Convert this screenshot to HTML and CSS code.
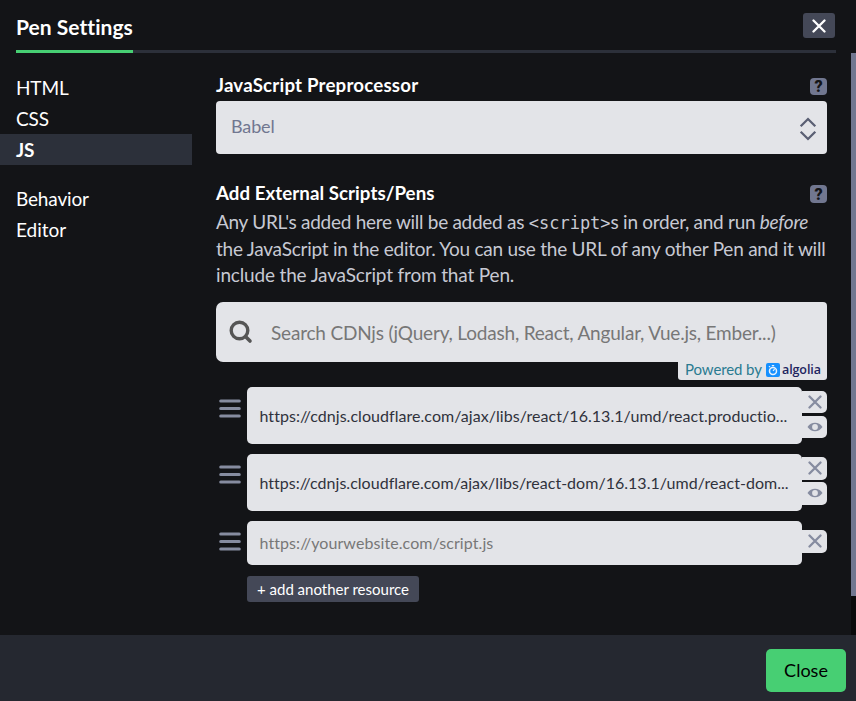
FILE: index.html
```html
<!DOCTYPE html>
<html lang="en">
<head>
<meta charset="utf-8">
<title>Pen Settings</title>
<link rel="stylesheet" href="styles.css">
</head>
<body>
<svg class="defs" width="0" height="0">
  <symbol id="x" viewBox="0 0 14 14"><path d="M1.500 1.500l11 11M12.500 1.500l-11 11" fill="none" stroke="currentColor" stroke-width="2.300" stroke-linecap="round"/></symbol>
  <symbol id="eye" viewBox="0 0 16 10"><path fill="currentColor" fill-rule="evenodd" d="M.5 5C2.500 2.200 5 .8 8 .8S13.500 2.200 15.500 5C13.500 7.800 11 9.200 8 9.200S2.500 7.800.5 5zM8 2.100a2.900 2.900 0 1 0 0 5.800 2.900 2.900 0 0 0 0-5.800z"/></symbol>
  <symbol id="grip" viewBox="0 0 22 20"><path d="M1.700 2h18.600M1.700 9.500h18.600M1.700 17h18.600" stroke="currentColor" stroke-width="3" stroke-linecap="round"/></symbol>
</svg>
<div class="modal">
  <header class="header">
    <h1 class="title">Pen Settings</h1>
    <button class="dismiss" aria-label="Close"><svg width="14" height="14"><use href="#x"/></svg></button>
  </header>
  <div class="body">
    <nav class="tabs">
      <a class="tab">HTML</a>
      <a class="tab">CSS</a>
      <a class="tab active">JS</a>
      <a class="tab spaced">Behavior</a>
      <a class="tab">Editor</a>
    </nav>
    <main class="content">
      <div class="heading preprocessor"><h2>JavaScript Preprocessor</h2><span class="help">?</span></div>
      <div class="select"><span>Babel</span>
        <svg width="18" height="24" viewBox="0 0 18 24" fill="none" stroke="currentColor" stroke-width="2.300"><path d="M1.700 9.200L9 2l7.300 7.200M1.700 14.800L9 22l7.300-7.200"/></svg>
      </div>
      <div class="heading external"><h2>Add External Scripts/Pens</h2><span class="help">?</span></div>
      <p class="intro"><span class="first">Any URL's added here will be added as <code>&lt;script&gt;</code>s in order, and run <em>before</em></span><br>the JavaScript in the editor. You can use the URL of any other Pen and it will<br><span class="last">include the JavaScript from that Pen.</span></p>
      <div class="search">
        <svg width="24" height="24" viewBox="0 0 24 24" fill="none" stroke="currentColor"><circle cx="10.500" cy="10.500" r="8.300" stroke-width="3.400"/><path d="M16.700 16.700l4.300 4.300" stroke-width="3.600" stroke-linecap="round"/></svg>
        <span>Search CDNjs (jQuery, Lodash, React, Angular, Vue.js, Ember...)</span>
      </div>
      <div class="powered">
        <span class="by">Powered by</span>
        <svg width="14" height="14" viewBox="0 0 14 14"><rect width="14" height="14" rx="2" fill="#1690ff"/><g fill="none" stroke="#e9f2fc"><circle cx="7" cy="7.900" r="3.500" stroke-width="1.500"/><path d="M5.800 2.700h2.400M3 4.100l1-1M7 7.900l1.600-1.700" stroke-width="1.200"/></g></svg>
        <span class="algolia">algolia</span>
      </div>
      <ul class="resources">
        <li class="resource">
          <svg class="grip" width="22" height="20"><use href="#grip"/></svg>
          <div class="field">https://cdnjs.cloudflare.com/ajax/libs/react/16.13.1/umd/react.productio...</div>
          <div class="actions"><button><svg width="14" height="14"><use href="#x"/></svg></button><button><svg width="16" height="10"><use href="#eye"/></svg></button></div>
        </li>
        <li class="resource">
          <svg class="grip" width="22" height="20"><use href="#grip"/></svg>
          <div class="field">https://cdnjs.cloudflare.com/ajax/libs/react-dom/16.13.1/umd/react-dom...</div>
          <div class="actions"><button><svg width="14" height="14"><use href="#x"/></svg></button><button><svg width="16" height="10"><use href="#eye"/></svg></button></div>
        </li>
        <li class="resource empty">
          <svg class="grip" width="22" height="20"><use href="#grip"/></svg>
          <div class="field">https://yourwebsite.com/script.js</div>
          <div class="actions"><button><svg width="14" height="14"><use href="#x"/></svg></button></div>
        </li>
      </ul>
      <button class="add">+ add another resource</button>
    </main>
    <div class="scrollbar"><div class="thumb"></div></div>
  </div>
  <footer class="footer"><button class="close">Close</button></footer>
</div>
</body>
</html>
```

FILE: styles.css
```css
* { box-sizing: border-box; }
body { margin: 0; background: #131417; color: #fff; font-family: Lato, "Liberation Sans", sans-serif; }
button { border: 0; padding: 0; font-family: inherit; color: inherit; display: flex; align-items: center; justify-content: center; }
h1, h2, p, ul { margin: 0; padding: 0; }
svg { display: block; flex: none; }
.defs { display: none; }
.modal { width: 856px; height: 701px; display: flex; flex-direction: column; overflow: hidden; white-space: nowrap; }

.header { height: 53px; margin: 0 20px 0 16px; display: flex; justify-content: space-between; align-items: flex-start; border-bottom: 3px solid #2c303a; flex: none; }
.title { width: 117px; height: 53px; padding-top: 14px; font-size: 21px; line-height: 25px; font-weight: 700; letter-spacing: .04px; border-bottom: 3px solid #47cf73; }
.dismiss { width: 32px; height: 25px; margin: 13px 1px 0 0; border-radius: 3px; background: #444857; }

.body { height: 582px; display: flex; flex: none; }
.tabs { width: 192px; padding-top: 19px; flex: none; }
.tab { display: block; height: 31px; padding-left: 16px; font-size: 19px; line-height: 31px; letter-spacing: -.15px; }
.tab.active { background: #2c303a; font-weight: 700; }
.tab.spaced { margin-top: 18px; }
.tab:last-child { letter-spacing: 0; }

.content { width: 611px; margin-left: 24px; padding-top: 20px; flex: none; }
.heading { height: 28px; display: flex; justify-content: space-between; align-items: flex-start; }
.heading h2 { font-size: 18.700px; line-height: 25px; font-weight: 700; letter-spacing: .05px; }
.preprocessor h2 { letter-spacing: .19px; }
.help { width: 17px; height: 17px; margin-top: 5px; border-radius: 4px; background: #717790; color: #131417; font: 900 16px/18px Roboto, sans-serif; text-align: center; }
.select { height: 53px; padding: 0 10px 0 15px; border-radius: 4px; background: #e3e4e8; color: #717790; font-size: 18px; letter-spacing: -.15px; display: flex; align-items: center; justify-content: space-between; }
.select span { padding-bottom: 3px; }
.select svg { margin-top: 3px; color: #5a5f73; }
.external { margin-top: 27px; }
.external .help { height: 18px; margin-top: 4px; line-height: 19px; }
.intro { color: #c7c9d3; font-size: 19px; line-height: 26.500px; letter-spacing: -.235px; }
.intro .first { letter-spacing: -.285px; }
.intro .last { letter-spacing: -.165px; }
.intro code { font: 17px/20px "DejaVu Sans Mono", monospace; letter-spacing: 0; }

.search { height: 60px; margin-top: 13px; padding-left: 13px; display: flex; align-items: center; border-radius: 7px 4px 0 7px; background: #e3e4e8; color: #777; font-size: 19px; letter-spacing: -.195px; }
.search span { padding-top: 1px; }
.search svg { color: #555; margin-right: 18px; }
.powered { width: 149px; height: 18px; margin-left: auto; padding: 0 0 2px 7px; display: flex; align-items: center; background: #e3e4e8; border-radius: 0 0 3px 3px; }
.powered svg { margin-top: 1px; }
.by { width: 81px; color: #2a7b91; font-size: 15px; line-height: 16px; letter-spacing: -.1px; padding-bottom: 1px; }
.algolia { margin-left: 2px; color: #1e2460; font: 600 12.500px/14px "Open Sans", sans-serif; letter-spacing: -.1px; }

.resources { margin-top: 7px; list-style: none; }
.resource { display: flex; align-items: flex-start; margin-bottom: 10px; }
.grip { margin: 12px 6px 0 3px; color: #868ca0; }
.resource + .resource .grip { margin-top: 11px; }
.field { width: 555px; height: 57px; padding-left: 12.500px; border-radius: 5px; background: #e3e4e8; color: #30323c; font-size: 16px; line-height: 57px; letter-spacing: .045px; }
.actions { margin-top: 4px; display: flex; flex-direction: column; gap: 3px; }
.actions button { width: 25px; height: 22px; border-radius: 0 5px 5px 0; background: #e3e4e8; color: #868ca0; }
.resource:nth-child(2) .field { letter-spacing: .025px; }
.resource:nth-child(2) .actions { margin-top: 3px; gap: 2px; }
.resource:nth-child(2) .actions button, .empty .actions button { height: 23px; }
.empty .field { height: 44px; line-height: 44px; color: #777; letter-spacing: .08px; }
.empty .actions { margin-top: 9px; }
.add { width: 172px; height: 26px; margin: 11px 0 0 31px; border-radius: 3px; background: #444857; font-size: 15px; }

.scrollbar { width: 5px; margin-left: auto; background: #0a0a0b; }
.thumb { height: 543px; background: #717790; }
.footer { height: 66px; padding: 14px 10px 0; background: #252830; display: flex; justify-content: flex-end; flex: none; }
.close { width: 80px; height: 43px; padding-bottom: 1px; border-radius: 5px; background: #47cf73; color: #000; font-size: 18px; }
```
